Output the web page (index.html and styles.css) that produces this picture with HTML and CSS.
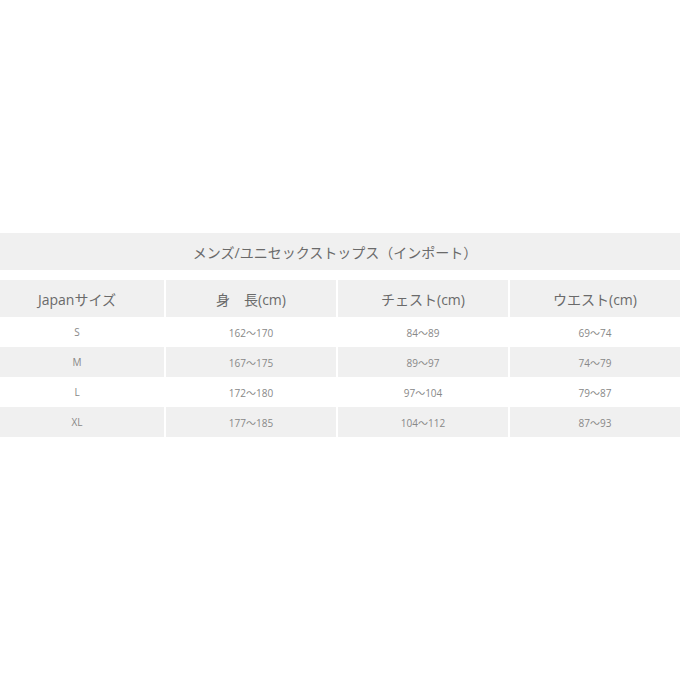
FILE: index.html
```html
<!DOCTYPE html>
<html lang="ja">
<head>
<meta charset="utf-8">
<title>サイズ表</title>
<link rel="stylesheet" href="styles.css">
</head>
<body>
<div class="page">
  <div class="title">メンズ/ユニセックストップス（インポート）</div>
  <div class="table">
    <div class="row head">
      <div class="cell">Japanサイズ</div>
      <div class="cell">身　長(cm)</div>
      <div class="cell">チェスト(cm)</div>
      <div class="cell">ウエスト(cm)</div>
    </div>
    <div class="row">
      <div class="cell">S</div>
      <div class="cell">162～170</div>
      <div class="cell">84～89</div>
      <div class="cell">69～74</div>
    </div>
    <div class="row shade">
      <div class="cell">M</div>
      <div class="cell">167～175</div>
      <div class="cell">89～97</div>
      <div class="cell">74～79</div>
    </div>
    <div class="row">
      <div class="cell">L</div>
      <div class="cell">172～180</div>
      <div class="cell">97～104</div>
      <div class="cell">79～87</div>
    </div>
    <div class="row shade">
      <div class="cell">XL</div>
      <div class="cell">177～185</div>
      <div class="cell">104～112</div>
      <div class="cell">87～93</div>
    </div>
  </div>
</div>
</body>
</html>
```
FILE: styles.css
```css
html, body {
  margin: 0;
  padding: 0;
  background: #ffffff;
  overflow: hidden;
}
body {
  font-family: "Open Sans", "Noto Sans CJK JP", sans-serif;
  color: #666;
}
.page {
  width: 690px;
  margin-left: -10px;
  padding-top: 233px;
}
.title {
  height: 37px;
  background: #f0f0f0;
  display: flex;
  align-items: center;
  justify-content: center;
  font-size: 14px;
  color: #6a6a6a;
  margin-bottom: 10px;
}
.table {
  display: flex;
  flex-direction: column;
}
.row {
  display: grid;
  grid-template-columns: 174px 170px 170px 170px;
  column-gap: 2px;
  height: 30px;
}
.row .cell {
  display: flex;
  align-items: center;
  justify-content: center;
  font-size: 10px;
  color: #888;
}
.row.head {
  height: 37px;
}
.row.head .cell {
  background: #f0f0f0;
  font-size: 14px;
  color: #6a6a6a;
}
.row.shade .cell {
  background: #f0f0f0;
}
```
